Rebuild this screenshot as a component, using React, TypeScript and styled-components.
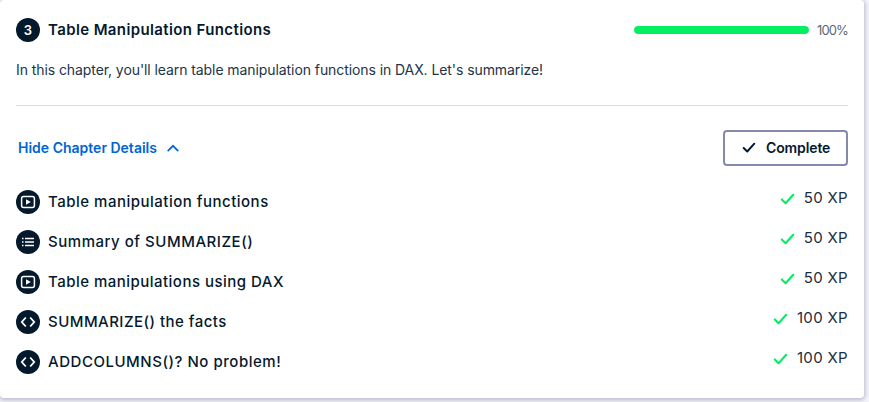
import React from 'react';
import styled, { createGlobalStyle } from 'styled-components';

const NAVY = '#05192d';
const GREEN = '#03ef62';

const GlobalStyle = createGlobalStyle`
  body {
    margin: 0;
    background: #f2f2f9;
    color: ${NAVY};
    font-family: Inter, 'Liberation Sans', sans-serif;
  }
`;

const Page = styled.main`
  height: 402px;
  overflow: hidden;
`;

const Card = styled.section`
  box-sizing: border-box;
  width: 864px;
  height: 398px;
  padding: 18px 16px 0;
  background: #fff;
  border-radius: 4px;
  box-shadow: 0 1px 4px 1px rgba(48, 57, 105, 0.3);
`;

const Header = styled.header`
  display: flex;
  align-items: center;
  height: 24px;
`;

const Badge = styled.span`
  display: flex;
  flex: none;
  align-items: center;
  justify-content: center;
  width: 24px;
  height: 24px;
  margin-right: 8px;
  border-radius: 50%;
  background: ${NAVY};
  color: #fff;
  font-size: 13px;
  font-weight: 600;
`;

const Title = styled.h2`
  flex: 1;
  margin: 0;
  font-size: 15px;
  font-weight: 600;
  line-height: 24px;
  letter-spacing: 0.38px;
`;

const Track = styled.div`
  width: 175px;
  height: 8px;
  border-radius: 4px;
  background: #e5e9ee;
  overflow: hidden;
`;

const Fill = styled.div<{ $percent: number }>`
  width: ${({ $percent }) => $percent}%;
  height: 100%;
  border-radius: 4px;
  background: ${GREEN};
`;

const Percent = styled.span`
  margin-left: 8px;
  width: 31px;
  color: #5b6a79;
  font-size: 13px;
  letter-spacing: -0.9px;
  white-space: nowrap;
`;

const Description = styled.p`
  box-sizing: border-box;
  height: 46px;
  margin: 18px 0 24px;
  border-bottom: 1px solid #d9dce1;
  color: #21344a;
  font-size: 14px;
  line-height: 20px;
  letter-spacing: -0.08px;
`;

const Actions = styled.div`
  display: flex;
  align-items: center;
  justify-content: space-between;
  height: 36px;
  margin-bottom: 18px;
`;

const Toggle = styled.button`
  display: flex;
  align-items: center;
  gap: 10px;
  padding: 0 2px;
  border: 0;
  background: none;
  color: #0065d1;
  font: 600 14px/20px Inter, 'Liberation Sans', sans-serif;
`;

const CompleteButton = styled.button`
  box-sizing: border-box;
  display: flex;
  align-items: center;
  gap: 10px;
  width: 125px;
  height: 36px;
  padding: 0 0 0 17px;
  border: 2px solid #848aad;
  border-radius: 4px;
  background: #fff;
  color: ${NAVY};
  font: 600 14px/20px Inter, 'Liberation Sans', sans-serif;
  letter-spacing: -0.12px;
`;

const Exercises = styled.ul`
  margin: 0;
  padding: 0;
  list-style: none;
`;

const Exercise = styled.li`
  display: flex;
  height: 40px;
`;

const ExerciseIcon = styled.svg`
  flex: none;
  width: 24px;
  height: 24px;
  margin: 6px 8px 0 0;
`;

const ExerciseName = styled.span<{ $tracking: number }>`
  flex: 1;
  padding-top: 6px;
  font-size: 15px;
  font-weight: 500;
  line-height: 24px;
  letter-spacing: ${({ $tracking }) => $tracking}px;
`;

const Reward = styled.span`
  display: flex;
  align-items: flex-start;
  gap: 9px;
  padding-top: 4px;
  color: #1a2d41;
  font-size: 15px;
  line-height: 20px;
  letter-spacing: 0.34px;
  white-space: nowrap;

  svg {
    margin-top: 5px;
  }
`;

type Kind = 'video' | 'quiz' | 'code';

const KindIcon = ({ kind }: { kind: Kind }) => (
  <ExerciseIcon viewBox="0 0 24 24" fill="none" aria-hidden>
    <circle cx="12" cy="12" r="12" fill={NAVY} />
    {kind === 'video' && (
      <>
        <rect x="5.6" y="6.6" width="12.8" height="10.8" rx="2" stroke="#fff" strokeWidth="1.5" />
        <path d="M10 9.2v5.6l4.8-2.8z" fill="#fff" />
      </>
    )}
    {kind === 'quiz' && (
      <path
        d="M6 8.5h1.5M6 12h1.5M6 15.5h1.5M9 8.5h9M9 12h9M9 15.5h9"
        stroke="#fff"
        strokeWidth="1.6"
      />
    )}
    {kind === 'code' && (
      <path d="M9.8 7.5 5.8 12l4 4.5M14.2 7.5l4 4.5-4 4.5" stroke="#fff" strokeWidth="1.8" />
    )}
  </ExerciseIcon>
);

const Check = ({ size, color }: { size: number; color: string }) => (
  <svg width={size} height={size * 0.8} viewBox="0 0 15 12" fill="none" aria-hidden>
    <path
      d="M1.8 6.4 5.6 10.2 13.2 1.8"
      stroke={color}
      strokeWidth="2.1"
      strokeLinecap="round"
      strokeLinejoin="round"
    />
  </svg>
);

const exercises: { kind: Kind; name: string; xp: number; tracking: number }[] = [
  { kind: 'video', name: 'Table manipulation functions', xp: 50, tracking: 0.5 },
  { kind: 'quiz', name: 'Summary of SUMMARIZE()', xp: 50, tracking: 0.53 },
  { kind: 'video', name: 'Table manipulations using DAX', xp: 50, tracking: 0.48 },
  { kind: 'code', name: 'SUMMARIZE() the facts', xp: 100, tracking: 0.47 },
  { kind: 'code', name: 'ADDCOLUMNS()? No problem!', xp: 100, tracking: 0.53 },
];

export default function App() {
  return (
    <Page>
      <GlobalStyle />
      <Card>
        <Header>
          <Badge>3</Badge>
          <Title>Table Manipulation Functions</Title>
          <Track>
            <Fill $percent={100} />
          </Track>
          <Percent>100%</Percent>
        </Header>
        <Description>
          In this chapter, you'll learn table manipulation functions in DAX. Let's summarize!
        </Description>
        <Actions>
          <Toggle>
            Hide Chapter Details
            <svg width="12" height="8" viewBox="0 0 12 8" fill="none" aria-hidden>
              <path d="M1.2 6.6 6 1.8l4.8 4.8" stroke="#0065d1" strokeWidth="1.7" strokeLinecap="round" />
            </svg>
          </Toggle>
          <CompleteButton>
            <Check size={14} color={NAVY} />
            Complete
          </CompleteButton>
        </Actions>
        <Exercises>
          {exercises.map(({ kind, name, xp, tracking }) => (
            <Exercise key={name}>
              <KindIcon kind={kind} />
              <ExerciseName $tracking={tracking}>{name}</ExerciseName>
              <Reward>
                <Check size={15} color={GREEN} />
                {xp} XP
              </Reward>
            </Exercise>
          ))}
        </Exercises>
      </Card>
    </Page>
  );
}
